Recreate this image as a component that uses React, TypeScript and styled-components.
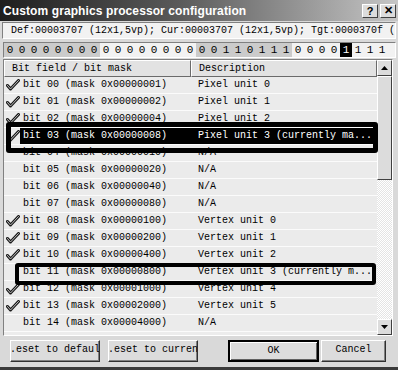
import * as React from "react"
import styled, { createGlobalStyle } from "styled-components"

const GlobalStyle = createGlobalStyle`
  html, body {
    margin: 0;
    padding: 0;
    background: #d9d9d9;
  }
`

const mono = `"Liberation Mono", "DejaVu Sans Mono", monospace`

const Window = styled.div`
  position: relative;
  width: 398px;
  height: 370px;
  box-sizing: border-box;
  background: #d9d9d9;
  border-bottom: 3px solid #3a3a3a;
  display: flex;
  flex-direction: column;
  overflow: hidden;
`

const TitleBar = styled.div`
  height: 21px;
  display: flex;
  align-items: center;
  justify-content: space-between;
  padding: 0 2px 0 3px;
  background: linear-gradient(to right, #1e1e1e 0%, #5a5a5a 45%, #c6c6c6 100%);
`

const Title = styled.span`
  color: #fff;
  font: bold 12px "Liberation Sans", Arial, sans-serif;
  letter-spacing: 0.1px;
`

const CaptionButtons = styled.div`
  display: flex;
  gap: 2px;
`

const CaptionButton = styled.div`
  width: 16px;
  height: 14px;
  box-sizing: border-box;
  background: #dcdcdc;
  border: 1px solid;
  border-color: #fff #404040 #404040 #fff;
  display: flex;
  align-items: center;
  justify-content: center;
  font: bold 11px "Liberation Sans", Arial, sans-serif;
  color: #000;
`

const Field = styled.div`
  margin: 1px 2px 0 2px;
  height: 17px;
  box-sizing: border-box;
  border: 1px solid;
  border-color: #808080 #fff #fff #808080;
  background: #f2f2f2;
  font: 10px ${mono};
  line-height: 15px;
  padding-left: 8px;
  white-space: nowrap;
  overflow: hidden;
  color: #000;
`

const BitBar = styled.div`
  margin: 3px 2px 0 3px;
  height: 16px;
  box-sizing: border-box;
  border: 1px solid;
  border-color: #808080 #fff #fff #808080;
  background: #f2f2f2;
  display: flex;
  overflow: hidden;
`

const Bit = styled.span<{ $shade: boolean; $sel: boolean }>`
  width: 12px;
  flex: none;
  text-align: center;
  font: 11px ${mono};
  line-height: 14px;
  background: ${(p) => (p.$sel ? "#000" : p.$shade ? "#cbcbcb" : "#f2f2f2")};
  color: ${(p) => (p.$sel ? "#fff" : "#000")};
`

const List = styled.div`
  margin: 1px 5px 0 3px;
  height: 277px;
  box-sizing: border-box;
  border: 1px solid;
  border-color: #808080 #fff #fff #808080;
  display: flex;
  background: #ececec;
`

const ListBody = styled.div`
  flex: 1;
  display: flex;
  flex-direction: column;
  overflow: hidden;
`

const HeaderRow = styled.div`
  display: grid;
  grid-template-columns: 187px 1fr;
  height: 17px;
  flex: none;
`

const HeaderCell = styled.div`
  box-sizing: border-box;
  border: 1px solid;
  border-color: #fff #6a6a6a #6a6a6a #fff;
  background: #e2e2e2;
  font: 10px ${mono};
  line-height: 15px;
  padding-left: 7px;
  color: #000;
  white-space: nowrap;
`

const Row = styled.div`
  display: grid;
  grid-template-columns: 16px 171px 1fr;
  height: 17px;
  flex: none;
  box-sizing: border-box;
  border-bottom: 1px solid #fbfbfb;
  background: #ebebeb;
`

const CheckCell = styled.div`
  display: flex;
  align-items: center;
  justify-content: flex-end;
`

const Cell = styled.div<{ $sel: boolean; $pad: number }>`
  font: 10px ${mono};
  line-height: 16px;
  padding-left: ${(p) => p.$pad}px;
  white-space: nowrap;
  overflow: hidden;
  background: ${(p) => (p.$sel ? "#000" : "transparent")};
  color: ${(p) => (p.$sel ? "#fff" : "#000")};
`

const ScrollBar = styled.div`
  width: 15px;
  flex: none;
  display: flex;
  flex-direction: column;
  background: repeating-conic-gradient(#ffffff 0 25%, #e4e4e4 0 50%) 0 0 / 2px 2px;
`

const ArrowButton = styled.div`
  height: 16px;
  flex: none;
  box-sizing: border-box;
  background: #dcdcdc;
  border: 1px solid;
  border-color: #fff #404040 #404040 #fff;
  display: flex;
  align-items: center;
  justify-content: center;
`

const Thumb = styled.div`
  height: 104px;
  flex: none;
  box-sizing: border-box;
  background: #dcdcdc;
  border: 1px solid;
  border-color: #fff #404040 #404040 #fff;
`

const Track = styled.div`
  flex: 1;
`

const Footer = styled.div`
  display: flex;
  align-items: center;
  padding: 3px 0 0 10px;
  height: 22px;
  margin-top: 1px;
`

const Button = styled.div<{ $w: number; $default?: boolean }>`
  width: ${(p) => p.$w}px;
  height: 22px;
  box-sizing: border-box;
  background: #dcdcdc;
  border: ${(p) => (p.$default ? "2px" : "1px")} solid;
  border-color: ${(p) => (p.$default ? "#000" : "#fff #303030 #303030 #fff")};
  box-shadow: ${(p) => (p.$default ? "inset 1px 1px #fff, inset -1px -1px #606060" : "inset -1px -1px #808080")};
  font: 10px ${mono};
  line-height: 18px;
  color: #000;
  white-space: nowrap;
  overflow: hidden;
  display: flex;
  justify-content: center;
`

const Spacer = styled.div<{ $w: number }>`
  width: ${(p) => p.$w}px;
  flex: none;
`

const Ring = styled.div<{ $x: number; $y: number; $w: number; $h: number; $t: number }>`
  position: absolute;
  left: ${(p) => p.$x}px;
  top: ${(p) => p.$y}px;
  width: ${(p) => p.$w}px;
  height: ${(p) => p.$h}px;
  box-sizing: border-box;
  border: ${(p) => p.$t}px solid #000;
  border-radius: 3px;
  pointer-events: none;
`

const Check = () => (
  <svg width="14" height="12" viewBox="0 0 14 12">
    <path d="M1.5 6.5 L4.5 10 L12.5 1.5" fill="none" stroke="#1a1a1a" strokeWidth="3" strokeLinecap="round" strokeLinejoin="round" />
    <path d="M1.5 6.5 L4.5 10 L12.5 1.5" fill="none" stroke="#bdbdbd" strokeWidth="1" strokeLinecap="round" strokeLinejoin="round" />
  </svg>
)

const Arrow = ({ up }: { up: boolean }) => (
  <svg width="7" height="4" viewBox="0 0 7 4">
    <path d={up ? "M0 4 L3.5 0 L7 4 Z" : "M0 0 L3.5 4 L7 0 Z"} fill="#000" />
  </svg>
)

const bits = "00000000000000000011011100001111".split("")
const selectedBit = 28

const descs: Record<number, string> = {
  0: "Pixel unit 0",
  1: "Pixel unit 1",
  2: "Pixel unit 2",
  3: "Pixel unit 3 (currently ma...",
  8: "Vertex unit 0",
  9: "Vertex unit 1",
  10: "Vertex unit 2",
  11: "Vertex unit 3 (currently m...",
  12: "Vertex unit 4",
  13: "Vertex unit 5",
}
const checked = [0, 1, 2, 3, 8, 9, 10, 12, 13]

const rows = Array.from({ length: 15 }, (_, i) => {
  const n = String(i).padStart(2, "0")
  const mask = (1 << i).toString(16).padStart(8, "0")
  return {
    i,
    field: `bit ${n} (mask 0x${mask})`,
    desc: descs[i] ?? "N/A",
    checked: checked.includes(i),
  }
})

export default function App() {
  return (
    <>
      <GlobalStyle />
      <Window>
        <TitleBar>
          <Title>Custom graphics processor configuration</Title>
          <CaptionButtons>
            <CaptionButton>?</CaptionButton>
            <CaptionButton>✕</CaptionButton>
          </CaptionButtons>
        </TitleBar>
        <Field>Def:00003707 (12x1,5vp); Cur:00003707 (12x1,5vp); Tgt:0000370f (</Field>
        <BitBar>
          {bits.map((b, i) => (
            <Bit key={i} $shade={Math.floor(i / 8) % 2 === 0} $sel={i === selectedBit}>
              {b}
            </Bit>
          ))}
        </BitBar>
        <List>
          <ListBody>
            <HeaderRow>
              <HeaderCell>Bit field / bit mask</HeaderCell>
              <HeaderCell>Description</HeaderCell>
            </HeaderRow>
            {rows.map((r) => (
              <Row key={r.i}>
                <CheckCell>{r.checked && <Check />}</CheckCell>
                <Cell $sel={r.i === 3} $pad={3}>{r.field}</Cell>
                <Cell $sel={r.i === 3} $pad={7}>{r.desc}</Cell>
              </Row>
            ))}
          </ListBody>
          <ScrollBar>
            <ArrowButton>
              <Arrow up />
            </ArrowButton>
            <Thumb />
            <Track />
            <ArrowButton>
              <Arrow up={false} />
            </ArrowButton>
          </ScrollBar>
        </List>
        <Footer>
          <Button $w={90}>.eset to defaul</Button>
          <Spacer $w={8} />
          <Button $w={90}>.eset to curren</Button>
          <Spacer $w={30} />
          <Button $w={91} $default>OK</Button>
          <Spacer $w={2} />
          <Button $w={65}>Cancel</Button>
        </Footer>
        <Ring $x={6} $y={122} $w={372} $h={31} $t={5} />
        <Ring $x={15} $y={263} $w={361} $h={22} $t={4} />
      </Window>
    </>
  )
}
